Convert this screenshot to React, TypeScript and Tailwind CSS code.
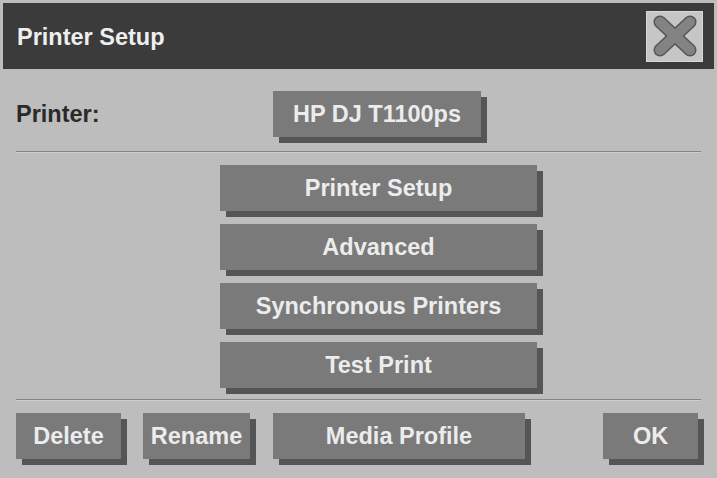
import React from 'react';

const FONT = { fontFamily: '"Liberation Sans", Arial, sans-serif' };

interface BtnProps {
  label: string;
  className?: string;
}

const Btn: React.FC<BtnProps> = ({ label, className = '' }) => (
  <button
    className={`h-[46px] pt-[2px] bg-[#7a7a7a] text-[#ececec] text-[23.5px] font-bold flex items-center justify-center shadow-[6px_6px_0_#555555] ${className}`}
  >
    {label}
  </button>
);

const CloseIcon = () => (
  <svg width="46" height="42" viewBox="0 0 46 42">
    <g strokeLinecap="round">
      <line x1="8" y1="7" x2="38" y2="35" stroke="#555555" strokeWidth="13" />
      <line x1="38" y1="7" x2="8" y2="35" stroke="#555555" strokeWidth="13" />
      <line x1="8" y1="7" x2="38" y2="35" stroke="#838383" strokeWidth="10" />
      <line x1="38" y1="7" x2="8" y2="35" stroke="#838383" strokeWidth="10" />
    </g>
  </svg>
);

export default function App() {
  return (
    <div className="w-[717px] h-[478px] bg-[#bdbdbd] p-[3px] overflow-hidden" style={FONT}>
      <header className="h-[66px] bg-[#3b3b3b] flex items-center justify-between pl-[14px] pr-[11px]">
        <h1 className="pt-[3px] text-[23.5px] font-bold text-[#eeeeee]">Printer Setup</h1>
        <div className="w-[57px] h-[51px] bg-[#c6c6c6] border border-[#d8d8d8] flex items-center justify-center">
          <CloseIcon />
        </div>
      </header>

      <div className="px-[13px]">
        <div className="flex items-center mt-[23px] h-[44px]">
          <span className="w-[257px] pt-[2px] text-[23.5px] font-bold text-[#2a2a2a]">Printer:</span>
          <Btn label="HP DJ T1100ps" className="w-[208px] h-[44px]" />
        </div>

        <div className="mt-[15px] h-px bg-[#858585] border-b border-[#cfcfcf] box-content" />

        <div className="flex flex-col items-start gap-[13px] pl-[204px] mt-[12px]">
          <Btn label="Printer Setup" className="w-[317px]" />
          <Btn label="Advanced" className="w-[317px]" />
          <Btn label="Synchronous Printers" className="w-[317px]" />
          <Btn label="Test Print" className="w-[317px]" />
        </div>

        <div className="mt-[11px] h-px bg-[#858585] border-b border-[#cfcfcf] box-content" />

        <div className="flex items-start mt-[12px]">
          <Btn label="Delete" className="w-[105px]" />
          <Btn label="Rename" className="w-[107px] ml-[22px]" />
          <Btn label="Media Profile" className="w-[252px] ml-[23px]" />
          <Btn label="OK" className="w-[95px] ml-[78px]" />
        </div>
      </div>
    </div>
  );
}
